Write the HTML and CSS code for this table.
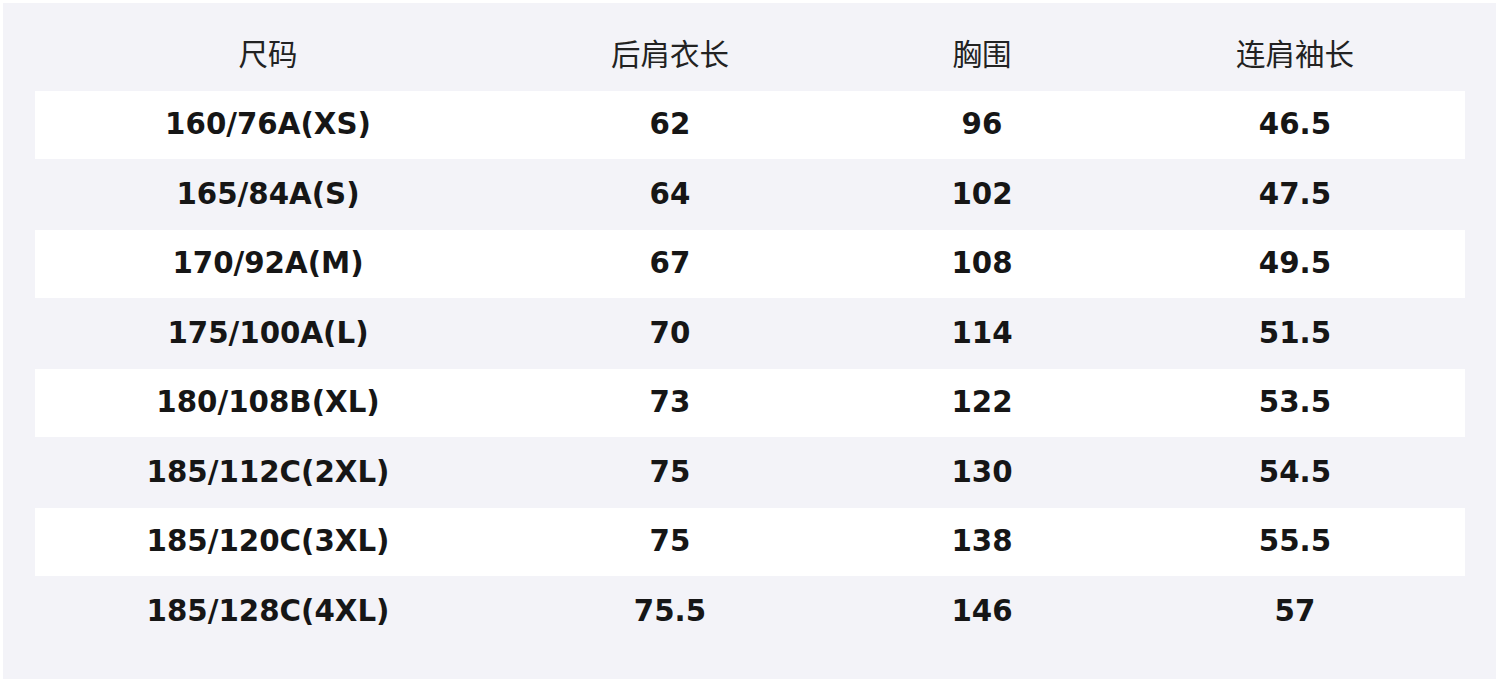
FILE: index.html
```html
<!DOCTYPE html>
<html lang="zh">
<head>
<meta charset="utf-8">
<link rel="stylesheet" href="styles.css">
</head>
<body>
<div class="panel">
  <table class="size-table">
    <colgroup>
      <col class="c1"><col class="c2"><col class="c3"><col class="c4">
    </colgroup>
    <thead>
      <tr><th>尺码</th><th>后肩衣长</th><th>胸围</th><th>连肩袖长</th></tr>
    </thead>
    <tbody>
      <tr class="odd"><td>160/76A(XS)</td><td>62</td><td>96</td><td>46.5</td></tr>
      <tr class="even"><td>165/84A(S)</td><td>64</td><td>102</td><td>47.5</td></tr>
      <tr class="odd"><td>170/92A(M)</td><td>67</td><td>108</td><td>49.5</td></tr>
      <tr class="even"><td>175/100A(L)</td><td>70</td><td>114</td><td>51.5</td></tr>
      <tr class="odd"><td>180/108B(XL)</td><td>73</td><td>122</td><td>53.5</td></tr>
      <tr class="even"><td>185/112C(2XL)</td><td>75</td><td>130</td><td>54.5</td></tr>
      <tr class="odd"><td>185/120C(3XL)</td><td>75</td><td>138</td><td>55.5</td></tr>
      <tr class="even"><td>185/128C(4XL)</td><td>75.5</td><td>146</td><td>57</td></tr>
    </tbody>
  </table>
</div>
</body>
</html>
```
FILE: styles.css
```css
html, body {
  margin: 0;
  padding: 0;
  background: #ffffff;
}
body {
  padding: 3px 4px 3px 3px;
  height: 682px;
  box-sizing: border-box;
}
.panel {
  background: #f3f3f8;
  height: 676px;
  padding: 0 31px 0 32px;
  box-sizing: border-box;
}
.size-table {
  width: 1430px;
  border-collapse: collapse;
  table-layout: fixed;
}
.c1 { width: 466px; }
.c2 { width: 338px; }
.c3 { width: 286px; }
.c4 { width: 340px; }
.size-table th {
  height: 88px;
  padding: 10px 0 0 0;
  box-sizing: border-box;
  font-family: "Noto Sans CJK SC", sans-serif;
  font-weight: 400;
  font-size: 29.5px;
  line-height: 40px;
  color: #222222;
  text-align: center;
  vertical-align: middle;
}
.size-table td {
  padding: 0 0 2px 0;
  box-sizing: border-box;
  font-family: "DejaVu Sans", sans-serif;
  font-weight: 700;
  font-size: 29.3px;
  color: #161616;
  text-align: center;
  vertical-align: middle;
}
.size-table tr.odd td {
  background: #ffffff;
  height: 68px;
}
.size-table tr.even td {
  height: 71px;
}
```
